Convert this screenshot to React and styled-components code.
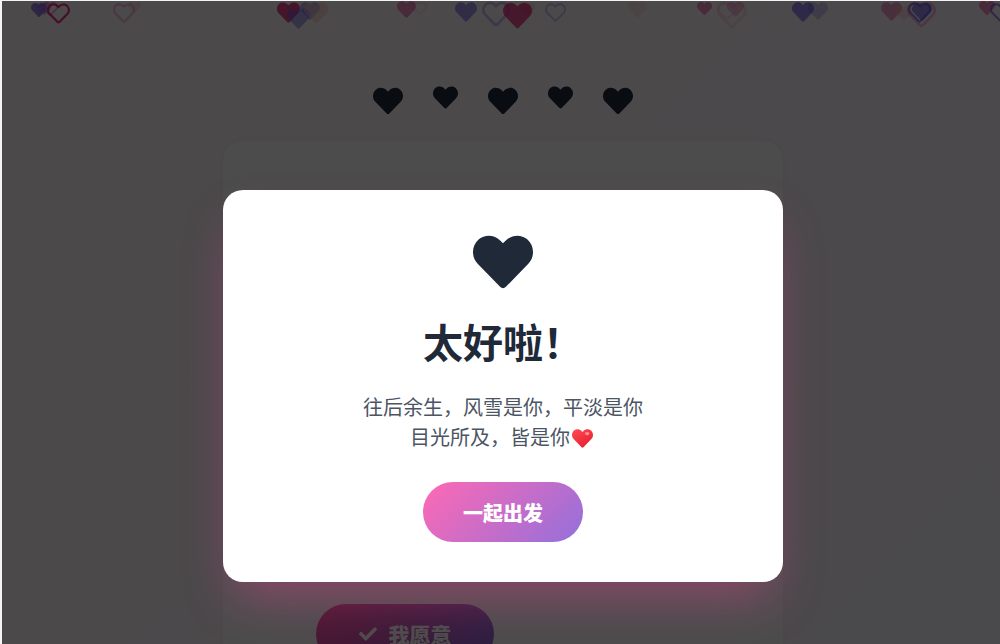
import React from "react";
import styled, { createGlobalStyle } from "styled-components";
import { FaHeart, FaRegHeart, FaCheck } from "react-icons/fa";

const Global = createGlobalStyle`
  html, body { margin: 0; padding: 0; height: 100%; overflow: hidden; background: #f3f4f6; }
  body { font-family: "Noto Sans CJK SC", sans-serif; }
`;

const Page = styled.div`
  position: relative;
  width: 1000px;
  height: 644px;
  margin-left: 2px;
  margin-top: 1px;
  overflow: hidden;
  background: linear-gradient(135deg, #fdf4f8 0%, #f9f5fb 100%);
`;
const Floating = styled.span`
  position: absolute;
  display: block;
  line-height: 0;
`;
const Row = styled.div`
  display: flex;
  justify-content: center;
  align-items: flex-start;
  gap: 30px;
  padding-top: 84px;
  width: 1002px;
  height: 56px;
`;
const Beat = styled.span`
  display: block;
  line-height: 0;
  color: #1f2937;
  font-size: ${(p) => (p.$small ? 25 : 30)}px;
  margin-top: ${(p) => (p.$small ? 0 : 1)}px;
`;
const BackCard = styled.div`
  width: 560px;
  height: 600px;
  margin-left: 221px;
  background: #fff;
  border-radius: 20px;
  box-shadow: 0 0 6px rgba(236, 72, 153, 0.06);
  padding: 463px 0 0 93px;
  box-sizing: border-box;
`;
const YesButton = styled.div`
  width: 178px;
  height: 60px;
  border-radius: 30px;
  background: linear-gradient(135deg, #ff4d9e, #8a6be0);
  color: #fff;
  display: flex;
  align-items: center;
  justify-content: center;
  gap: 12px;
  font-size: 21px;
  font-weight: 900;
`;
const Overlay = styled.div`
  position: absolute;
  inset: 0;
  background: rgba(0, 0, 0, 0.7);
  padding: 189px 0 0 221px;
`;
const Modal = styled.div`
  width: 560px;
  height: 392px;
  box-sizing: border-box;
  background: #fff;
  border-radius: 20px;
  box-shadow: 0 25px 50px -12px rgba(236, 72, 153, 0.42);
  display: flex;
  flex-direction: column;
  align-items: center;
  padding-top: 42px;
`;
const BigHeart = styled.span`
  display: block;
  line-height: 0;
  font-size: 60px;
  color: #1f2937;
`;
const Title = styled.h2`
  margin: 19px 0 0;
  font-size: 40px;
  line-height: 60px;
  font-weight: 700;
  color: #1f2937;
`;
const Message = styled.p`
  margin: 21px 0 0;
  font-size: 20px;
  line-height: 30px;
  color: #4b5563;
  text-align: center;
  font-weight: 400;
`;
const Go = styled.div`
  margin-top: 30px;
  width: 160px;
  height: 60px;
  border-radius: 30px;
  background: linear-gradient(135deg, #ff69b4, #9370db);
  color: #fff;
  font-size: 20px;
  font-weight: 900;
  display: flex;
  align-items: center;
  justify-content: center;
`;
const Emoji = styled.svg`
  width: 21px;
  height: 19px;
  vertical-align: -3px;
  margin-left: 2px;
  margin-right: 3px;
`;

// left, top, width, colour, filled, opacity (as seen in the dimmed picture)
const hearts = [
  [31, 3, 16, "#7c5cd6", 1, 0.75], [37, 3, 14, "#8b5cf6", 1, 0.5], [42, 2, 16, "#ec4899", 0, 0.5], [47, 3, 23, "#e11d74", 0, 0.9],
  [128, 2, 13, "#fbb6a8", 1, 0.3], [113, 3, 22, "#f472b6", 0, 0.45],
  [277, 2, 23, "#e11d74", 1, 0.8], [287, 8, 23, "#6d5ce7", 1, 0.5], [300, 2, 20, "#6d5ce7", 1, 0.45], [304, 2, 24, "#f9c0b0", 1, 0.45],
  [412, 2, 15, "#fbb6a8", 0, 0.35], [397, 1, 19, "#ec4899", 1, 0.6],
  [455, 2, 22, "#6d5ce7", 1, 0.6], [482, 2, 28, "#8b7ce7", 0, 0.45], [520, 3, 15, "#fbb6a8", 1, 0.4], [503, 3, 29, "#e11d74", 1, 0.75], [545, 3, 21, "#8b7ce7", 0, 0.4],
  [628, 1, 19, "#fbb6a8", 1, 0.25],
  [697, 2, 15, "#ec4899", 1, 0.6], [717, 2, 30, "#fbb6a8", 0, 0.35], [717, 2, 20, "#f9a8d4", 0, 0.3], [727, 2, 17, "#f472b6", 1, 0.4],
  [808, 2, 20, "#8b7ce7", 1, 0.35], [792, 2, 22, "#6d5ce7", 1, 0.7],
  [881, 2, 21, "#ec4899", 1, 0.5], [895, 5, 18, "#fbb6a8", 1, 0.3], [907, 2, 29, "#f472b6", 0, 0.45], [908, 2, 23, "#6d5ce7", 0, 0.7], [912, 3, 20, "#6d5ce7", 1, 0.7],
  [979, 1, 16, "#ec4899", 1, 0.6], [990, 3, 21, "#6d5ce7", 0, 0.7],
];

export default function App() {
  return (
    <Page>
      <Global />
      {hearts.map(([x, y, w, c, filled, o], i) => {
        const Icon = filled ? FaHeart : FaRegHeart;
        return (
          <Floating
            key={i}
            style={{ left: x - 2, top: y - 1 - w * 0.0625, opacity: o, color: c, fontSize: w }}
          >
            <Icon />
          </Floating>
        );
      })}
      <Row>
        {[0, 1, 0, 1, 0].map((s, i) => (
          <Beat key={i} $small={!!s}><FaHeart /></Beat>
        ))}
      </Row>
      <BackCard>
        <YesButton>
          <FaCheck size={18} />
          我愿意
        </YesButton>
      </BackCard>
      <Overlay>
        <Modal>
          <BigHeart><FaHeart /></BigHeart>
          <Title>{"太好啦\uFF01"}</Title>
          <Message>
            {"往后余生\uFF0C风雪是你\uFF0C平淡是你"}<br />{"目光所及\uFF0C皆是你"}
            <Emoji viewBox="0 0 512 460">
              <defs>
                <linearGradient id="emojiHeart" x1="0" y1="0" x2="0.7" y2="1">
                  <stop offset="0" stopColor="#ff4b55" />
                  <stop offset="1" stopColor="#e8202e" />
                </linearGradient>
              </defs>
              <path
                transform="translate(0 -26)"
                fill="url(#emojiHeart)"
                d="M462.3 62.6C407.5 15.9 326 24.3 275.7 76.2L256 96.5l-19.7-20.3C186.1 24.3 104.5 15.9 49.7 62.6c-62.8 53.6-66.1 149.8-9.9 207.9l193.5 199.8c12.5 12.9 32.8 12.9 45.3 0l193.5-199.8c56.3-58.1 53-154.3-9.8-207.9z"
              />
              <ellipse cx="370" cy="110" rx="55" ry="38" fill="#ff9aa2" opacity="0.85" />
            </Emoji>
          </Message>
          <Go>一起出发</Go>
        </Modal>
      </Overlay>
    </Page>
  );
}
